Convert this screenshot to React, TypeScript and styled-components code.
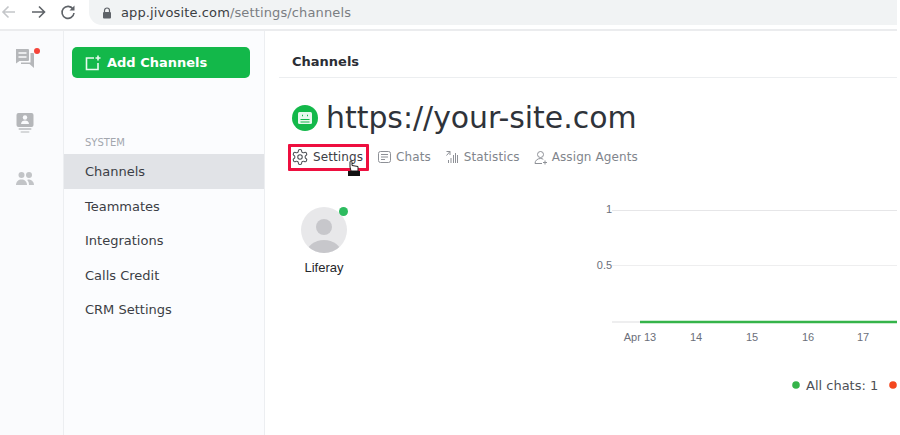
import React from "react";
import styled, { createGlobalStyle } from "styled-components";

const Global = createGlobalStyle`
  html, body { margin: 0; padding: 0; background: #fff; overflow: hidden; }
  body { font-family: "DejaVu Sans", sans-serif; }
`;

const Page = styled.div`
  width: 897px; height: 435px; display: flex; flex-direction: column; overflow: hidden;
`;
const BrowserBar = styled.div`
  height: 29px; flex: none; display: flex; align-items: flex-start; background: #fff;
  border-bottom: 2px solid #ebecee;
`;
const NavIcon = styled.svg<{ $ml: number }>`
  width: 16px; height: 16px; flex: none; margin-left: ${(p) => p.$ml}px; margin-top: 4px;
`;
const UrlPill = styled.div`
  margin-left: 13px; flex: 1; height: 25px; border-radius: 0 0 0 13px;
  background: #f1f3f4; display: flex; align-items: center; padding-left: 13px;
  font-size: 13px; color: #7b7e82; letter-spacing: .01em; white-space: nowrap;
`;
const LockIcon = styled.svg` margin-right: 9px; flex: none; `;
const Host = styled.span` color: #3c4043; `;
const Body = styled.div` flex: 1; display: flex; min-height: 0; `;
const Rail = styled.nav`
  width: 49px; flex: none; background: #fafbfd; border-right: 1px solid #eceef1; padding-right: 14px;
  display: flex; flex-direction: column; align-items: center; padding-top: 16px;
`;
const RailSlot = styled.div<{ $mb: number }>`
  position: relative; width: 24px; height: 24px; margin-bottom: ${(p) => p.$mb}px;
`;
const RedDot = styled.span`
  position: absolute; top: 1px; right: -3px; width: 6px; height: 6px; border-radius: 50%; background: #f5443a;
`;
const Sidebar = styled.aside`
  width: 200px; flex: none; background: #fbfcfe; border-right: 1px solid #eceef1; padding-top: 16px;
`;
const AddButton = styled.div`
  margin-left: 8px; width: 178px; height: 31px; border-radius: 5px; background: #13b84a; color: #fff;
  display: flex; align-items: center; padding-left: 13px; box-sizing: border-box; gap: 6px;
  font-size: 13px; font-weight: 700;
`;
const SectionLabel = styled.div`
  margin: 55px 0 0 21px; height: 21px; font-size: 10px; line-height: 20px; color: #a3a7ae;
`;
const Item = styled.div<{ $active?: boolean }>`
  height: 34.5px; line-height: 35px; padding-left: 21px; font-size: 13px; color: #3b3e45;
  background: ${(p) => (p.$active ? "#e1e3e7" : "transparent")};
`;
const Main = styled.main` flex: 1; min-width: 0; padding-left: 14px; position: relative; `;
const Header = styled.div`
  height: 47px; padding: 17px 0 0 13px; box-sizing: border-box; border-bottom: 1px solid #eceef0;
  font-size: 13px; font-weight: 700; line-height: 28px; color: #2b2e35;
`;
const TitleRow = styled.div`
  margin: 25px 0 0 13px; display: flex; align-items: center; gap: 8px; height: 30px;
`;
const TitleIcon = styled.span`
  width: 26px; height: 26px; border-radius: 50%; background: #13b84a; display: flex;
  align-items: center; justify-content: center; flex: none;
`;
const Title = styled.h1`
  margin: 0; font-size: 29.9px; font-weight: 400; color: #2f333a; line-height: 30px; white-space: nowrap;
`;
const Tabs = styled.div`
  margin: 12px 0 0 12px; display: flex; align-items: center; height: 24px;
`;
const Tab = styled.div<{ $active?: boolean; $mr: number }>`
  display: flex; align-items: center; gap: 4px; font-size: 12px; letter-spacing: .1px; white-space: nowrap;
  margin-right: ${(p) => p.$mr}px; color: ${(p) => (p.$active ? "#3d4046" : "#81858c")};
`;
const Highlight = styled.div`
  position: absolute; left: 23px; top: 113px; width: 81px; height: 27px; box-sizing: border-box;
  border: 3px solid #ee0f3f; border-radius: 1px;
`;
const Cursor = styled.svg`
  position: absolute; left: 83px; top: 129px; width: 14px; height: 16px;
`;
const Content = styled.div` display: flex; margin-top: 38px; `;
const Agent = styled.div`
  width: 90px; display: flex; flex-direction: column; align-items: center; flex: none;
`;
const AvatarWrap = styled.div` position: relative; width: 46px; height: 46px; `;
const Online = styled.span`
  position: absolute; top: 0; right: -1px; width: 9px; height: 9px; border-radius: 50%; background: #2dbb5f;
`;
const AgentName = styled.div`
  margin-top: 7px; font-family: "Liberation Sans", Arial, sans-serif; font-size: 13px; color: #26282c; line-height: 16px;
`;
const Chart = styled.svg`
  flex: none; margin: -6px 0 0 205px; width: 323px; height: 201px;
`;
const AX = "Liberation Sans, Arial, sans-serif";

const App: React.FC = () => (
  <Page>
    <Global />
    <BrowserBar>
      <NavIcon $ml={0} viewBox="0 0 16 16" fill="none" stroke="#c4c6c9" strokeWidth="1.6">
        <path d="M15 8H3M8.500 2.500 3 8l5.500 5.500" />
      </NavIcon>
      <NavIcon $ml={14} viewBox="0 0 16 16" fill="none" stroke="#5f6368" strokeWidth="1.6">
        <path d="M2 8h12.500M9 2.500 14.500 8 9 13.500" />
      </NavIcon>
      <NavIcon $ml={14} viewBox="0 0 16 16" fill="none" stroke="#5f6368" strokeWidth="1.6">
        <path d="M13 5a6 6 0 1 0 1 4" />
        <path d="M14.500 1.500v5h-5z" fill="#5f6368" stroke="none" />
      </NavIcon>
      <UrlPill>
        <LockIcon width="10" height="12" viewBox="0 0 10 12">
          <path d="M2.500 5V3.500a2.500 2.500 0 0 1 5 0V5" fill="none" stroke="#5f6368" strokeWidth="1.200" />
          <rect x="1" y="5" width="8" height="6.500" rx="1" fill="#5f6368" />
        </LockIcon>
        <Host>app.jivosite.com</Host>/settings/channels
      </UrlPill>
    </BrowserBar>
    <Body>
      <Rail>
        <RailSlot $mb={40}>
          <svg width="24" height="24" viewBox="0 0 24 24">
            <path fill="#b5b7ba" d="M3 2h12a1 1 0 0 1 1 1v10a1 1 0 0 1-1 1H6.500L3 16.500z" />
            <path fill="#b5b7ba" d="M17.500 6H20a1 1 0 0 1 1 1v14l-4.500-4H8v-1.500h9.500z" />
            <path stroke="#fafbfd" strokeWidth="1.500" d="M5.500 6h8M5.500 10h8" />
          </svg>
          <RedDot />
        </RailSlot>
        <RailSlot $mb={32}>
          <svg width="24" height="24" viewBox="0 0 24 24">
            <rect x="3.500" y="2" width="17" height="14" rx="2" fill="#b5b7ba" />
            <circle cx="12" cy="6.500" r="2.200" fill="#fafbfd" />
            <path fill="#fafbfd" d="M8 13c0-2.500 2-3.500 4-3.500s4 1 4 3.500z" />
            <rect x="5.500" y="17" width="13" height="2" rx="1" fill="#c9cbce" />
            <rect x="7.500" y="20" width="9" height="2" rx="1" fill="#d6d8da" />
          </svg>
        </RailSlot>
        <RailSlot $mb={0}>
          <svg width="24" height="24" viewBox="0 0 24 24">
            <circle cx="8.500" cy="8" r="3" fill="#c2c4c7" />
            <circle cx="16" cy="8" r="3" fill="#c2c4c7" />
            <path fill="#c2c4c7" d="M3 18c0-3.500 2.500-5.500 5.500-5.500S14 14.500 14 18z" />
            <path fill="#c2c4c7" d="M15 12.500c3 0 6 1.800 6 5.500h-5c0-2-.5-3.500-1.800-5z" />
          </svg>
        </RailSlot>
      </Rail>
      <Sidebar>
        <AddButton>
          <svg width="16" height="16" viewBox="0 0 16 16" fill="none" stroke="#e9f9ef" strokeWidth="1.600">
            <path d="M9 3H1.500v11.500H13V8" />
            <path d="M13 .5v5M10.500 3h5" />
          </svg>
          Add Channels
        </AddButton>
        <SectionLabel>SYSTEM</SectionLabel>
        <Item $active>Channels</Item>
        <Item>Teammates</Item>
        <Item>Integrations</Item>
        <Item>Calls Credit</Item>
        <Item>CRM Settings</Item>
      </Sidebar>
      <Main>
        <Header>Channels</Header>
        <TitleRow>
          <TitleIcon>
            <svg width="14" height="12" viewBox="0 0 14 12">
              <rect width="14" height="12" rx="1.500" fill="#e8f8ee" />
              <path stroke="#13b84a" strokeWidth="1.200" d="M2.500 7.500h9M2.500 10h9" />
              <path stroke="#13b84a" strokeWidth="1.400" d="M4 3.500h1M9 3.500h1" />
            </svg>
          </TitleIcon>
          <Title>https://your-site.com</Title>
        </TitleRow>
        <Tabs>
          <Tab $active $mr={15}>
            <svg width="18" height="18" viewBox="0 0 24 24" fill="none" stroke="#4b4e54" strokeWidth="1.400" strokeLinecap="round" strokeLinejoin="round">
              <path d="M12.220 2h-.440a2 2 0 0 0-2 2v.180a2 2 0 0 1-1 1.730l-.430.250a2 2 0 0 1-2 0l-.150-.080a2 2 0 0 0-2.730.730l-.220.380a2 2 0 0 0 .730 2.730l.150.100a2 2 0 0 1 1 1.720v.510a2 2 0 0 1-1 1.740l-.150.090a2 2 0 0 0-.730 2.730l.220.380a2 2 0 0 0 2.730.730l.150-.080a2 2 0 0 1 2 0l.430.250a2 2 0 0 1 1 1.730V20a2 2 0 0 0 2 2h.440a2 2 0 0 0 2-2v-.180a2 2 0 0 1 1-1.730l.430-.250a2 2 0 0 1 2 0l.150.080a2 2 0 0 0 2.730-.730l.220-.390a2 2 0 0 0-.730-2.730l-.150-.080a2 2 0 0 1-1-1.740v-.500a2 2 0 0 1 1-1.740l.150-.090a2 2 0 0 0 .730-2.730l-.220-.380a2 2 0 0 0-2.730-.730l-.150.080a2 2 0 0 1-2 0l-.430-.250a2 2 0 0 1-1-1.730V4a2 2 0 0 0-2-2z" />
              <circle cx="12" cy="12" r="3" />
            </svg>
            Settings
          </Tab>
          <Tab $mr={14}>
            <svg width="14" height="14" viewBox="0 0 14 14" fill="none" stroke="#8e9197" strokeWidth="1">
              <rect x=".5" y="1.500" width="12" height="11" rx="2" />
              <path d="M3 4.500h7M3 7h7M3 9.500h4" />
            </svg>
            Chats
          </Tab>
          <Tab $mr={14}>
            <svg width="15" height="14" viewBox="0 0 15 14" fill="none" stroke="#8e9197" strokeWidth="1">
              <path d="M1.500 1.500h3.500v3.500M5 1.500 1.500 5.500" />
              <path d="M3.500 13v-3M6 13V8M8.500 13V5M10.500 13V3M12.500 13V5" />
            </svg>
            Statistics
          </Tab>
          <Tab $mr={0}>
            <svg width="14" height="15" viewBox="0 0 14 15" fill="none" stroke="#8e9197" strokeWidth="1">
              <circle cx="6.500" cy="4.500" r="3" />
              <path d="M1 13.500c0-3 2.500-5 5.500-5 1 0 2 .2 2.800.8M1 13.500h7M11 10.500v4M9 12.500h4" />
            </svg>
            Assign Agents
          </Tab>
        </Tabs>
        <Highlight />
        <Cursor viewBox="0 0 14 16">
          <path d="M2 7V1.500Q3 0 4 1.500V5.500L10 6.500V11H3z" fill="#fff" stroke="#222" strokeWidth="1" />
          <rect x="0" y="11" width="12" height="5" fill="#111" />
        </Cursor>
        <Content>
          <Agent>
            <AvatarWrap>
              <svg width="46" height="46" viewBox="0 0 46 46">
                <defs>
                  <clipPath id="av"><circle cx="23" cy="23" r="23" /></clipPath>
                </defs>
                <circle cx="23" cy="23" r="23" fill="#e8e8ea" />
                <circle cx="23" cy="20" r="8" fill="#c7c7cb" />
                <ellipse cx="23" cy="46" rx="17" ry="13" fill="#c7c7cb" clipPath="url(#av)" />
              </svg>
              <Online />
            </AvatarWrap>
            <AgentName>Liferay</AgentName>
          </Agent>
          <Chart viewBox="0 -6 323 201">
            <line x1="38" y1="3.500" x2="323" y2="3.500" stroke="#e6e6e8" />
            <line x1="38" y1="58.500" x2="323" y2="58.500" stroke="#eeeeef" />
            <line x1="38" y1="115" x2="66" y2="115" stroke="#eeeeef" strokeWidth="2" />
            <line x1="66" y1="115" x2="323" y2="115" stroke="#35b44a" strokeWidth="2.500" />
            <g fontFamily={AX} fontSize="11" fill="#6b6f7a" textAnchor="middle">
              <text x="35" y="6">1</text>
              <text x="30.500" y="62">0.5</text>
              <text x="66" y="134">Apr 13</text>
              <text x="122" y="134">14</text>
              <text x="178" y="134">15</text>
              <text x="234" y="134">16</text>
              <text x="289" y="134">17</text>
            </g>
            <circle cx="222" cy="178" r="3.800" fill="#35b44a" />
            <text x="232" y="183" fontFamily="DejaVu Sans" fontSize="13" fill="#4d5056">All chats: 1</text>
            <circle cx="319" cy="178" r="3.800" fill="#f4471f" />
          </Chart>
        </Content>
      </Main>
    </Body>
  </Page>
);

export default App;
